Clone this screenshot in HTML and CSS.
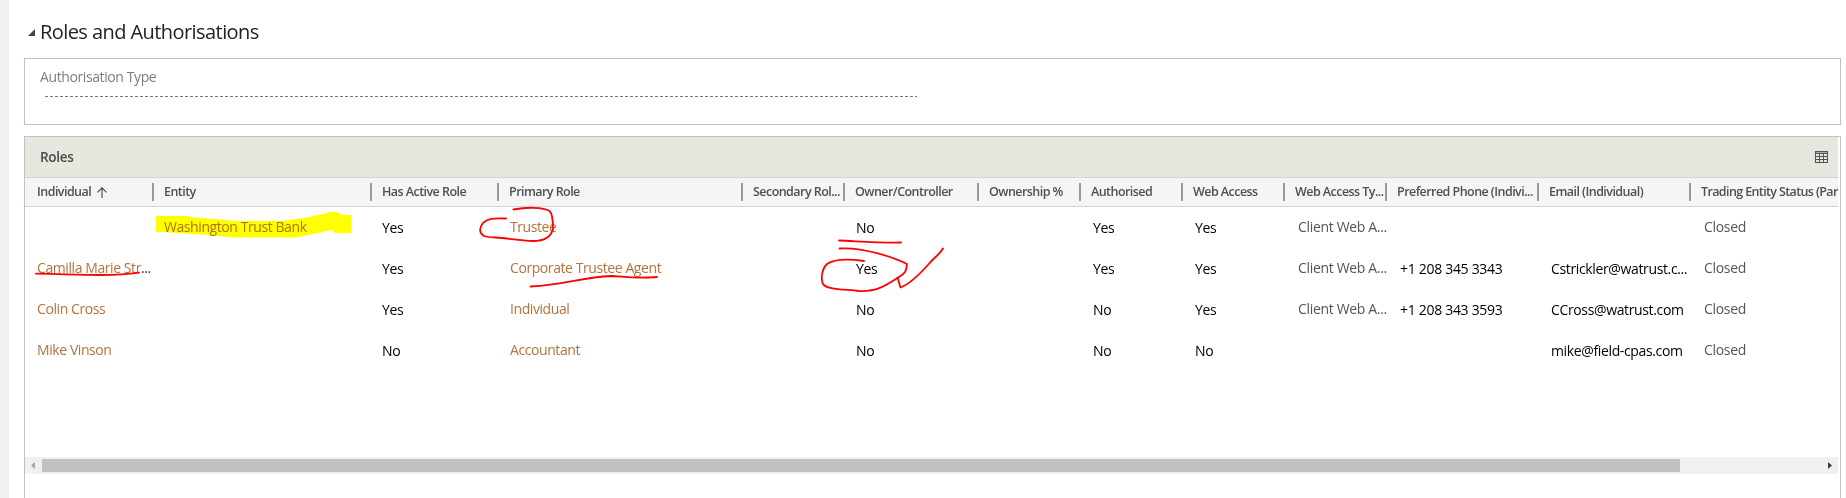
FILE: index.html
```html
<!DOCTYPE html>
<html lang="en">
<head>
<meta charset="utf-8">
<title>Roles and Authorisations</title>
<link rel="stylesheet" href="styles.css">
</head>
<body>
<main class="page">
  <h1 class="section-title">
    <svg class="caret" width="7" height="7" viewBox="0 0 7 7"><path d="M7 0V7H0Z" fill="#444"/></svg>
    <span>Roles and Authorisations</span>
  </h1>
  <section class="field-box">
    <label class="field-label">Authorisation Type</label>
    <div class="field-value"></div>
  </section>
  <section class="grid-box">
    <header class="grid-title">
      <span>Roles</span>
      <svg width="13" height="12" viewBox="0 0 13 12" fill="none" stroke="#555" shape-rendering="crispEdges"><path d="M.5 .5H12.5V11.5H.5ZM0 2.5H13M0 5.5H13M0 8.5H13M4.5 2V12M8.5 2V12"/><path d="M1 1.5H12" stroke="#aaa"/></svg>
    </header>
    <div class="row head">
      <div class="th first"><span>Individual</span><svg class="sort" width="10" height="11" viewBox="0 0 10 11" fill="none" stroke="#444" stroke-width="1.1"><path d="M5 11V1M.5 5.3L5 .8L9.5 5.3"/></svg></div>
      <div class="th"><span>Entity</span></div>
      <div class="th"><span>Has Active Role</span></div>
      <div class="th"><span>Primary Role</span></div>
      <div class="th"><span>Secondary Rol...</span></div>
      <div class="th"><span>Owner/Controller</span></div>
      <div class="th"><span>Ownership %</span></div>
      <div class="th"><span>Authorised</span></div>
      <div class="th"><span>Web Access</span></div>
      <div class="th"><span>Web Access Ty...</span></div>
      <div class="th"><span>Preferred Phone (Indivi...</span></div>
      <div class="th"><span>Email (Individual)</span></div>
      <div class="th last"><span>Trading Entity Status (Par</span></div>
    </div>
    <div class="row">
      <div></div><div class="link">Washington Trust Bank</div><div class="val">Yes</div><div class="link role">Trustee</div><div></div><div class="val own">No</div><div></div><div class="val in">Yes</div><div class="val in">Yes</div><div class="opt">Client Web A...</div><div></div><div></div><div class="opt">Closed</div>
    </div>
    <div class="row">
      <div class="link first">Camilla Marie Str<span class="dots">...</span></div><div></div><div class="val">Yes</div><div class="link role">Corporate Trustee Agent</div><div></div><div class="val own">Yes</div><div></div><div class="val in">Yes</div><div class="val in">Yes</div><div class="opt">Client Web A...</div><div class="val phone">+1 208 345 3343</div><div class="val mail">Cstrickler@watrust.c...</div><div class="opt">Closed</div>
    </div>
    <div class="row">
      <div class="link first">Colin Cross</div><div></div><div class="val">Yes</div><div class="link role">Individual</div><div></div><div class="val own">No</div><div></div><div class="val in">No</div><div class="val in">Yes</div><div class="opt">Client Web A...</div><div class="val phone">+1 208 343 3593</div><div class="val mail">CCross@watrust.com</div><div class="opt">Closed</div>
    </div>
    <div class="row">
      <div class="link first">Mike Vinson</div><div></div><div class="val">No</div><div class="link role">Accountant</div><div></div><div class="val own">No</div><div></div><div class="val in">No</div><div class="val in">No</div><div></div><div></div><div class="val mail">mike@field-cpas.com</div><div class="opt">Closed</div>
    </div>
    <div class="scrollbar">
      <svg width="17" height="17" viewBox="0 0 17 17"><path d="M10 5V12L6 8.5Z" fill="#a3a3a3"/></svg>
      <div class="thumb"></div>
      <svg width="17" height="17" viewBox="0 0 17 17"><path d="M7 5V12L11 8.5Z" fill="#404040"/></svg>
    </div>
  </section>
</main>
<svg class="marks highlight" width="1846" height="498" viewBox="0 0 1846 498">
  <path fill="#ff0" d="M156 216H185L195 217.5L215 219L235 221H282L307 217.5L325 213.5L330 212H337L342 215H351V233H335L332 230L313 234L295 237.5H235L213 235.5L193 234L161 232H156Z"/>
</svg>
<svg class="marks" width="1846" height="498" viewBox="0 0 1846 498">
  <g fill="none" stroke="#f00" stroke-width="1.8" stroke-linecap="round" stroke-linejoin="round">
    <path d="M36 273.7C60 274 80 275 101 275C118 275 130 274 139 272.7"/>
    <path d="M506 218.5C492 218 488 218.500 483 223C479 228 479 233 484 236C489 238 497 237 507 238.500C520 240 525 241 533 241C544 241 551 237 553 229C553 222 553 214 549.500 211C543 207 526 207 513.500 209.500"/>
    <path d="M530.500 286.500C565 285 582 277 611 276C622 276 630 279 657 277"/>
    <path d="M839 240.500C855 241 877 243 901 242.500"/>
    <path d="M864 261C850 259 834 259 827 264C821 270 821 280 823 284C826 289 840 289 859 291C876 292 885 286 899 277C907 272 906 270 907 264C895 258 864 247 839.500 248.500"/>
    <path d="M897.500 277.500L900.500 287.500C915 282 927 265 934 258.500C938 255 941 252 943 248.500"/>
  </g>
</svg>
</body>
</html>
```
FILE: styles.css
```css
* { box-sizing: border-box; }
body {
  margin: 0;
  background: #fff;
  font-family: "Open Sans", "Noto Sans", sans-serif;
  font-size: 14px;
  overflow: hidden;
}
.page {
  height: 498px;
  border-left: 9px solid #f0f0f0;
  padding: 0 5px 0 15px;
  display: flex;
  flex-direction: column;
}
.section-title {
  margin: 0;
  height: 58px;
  padding: 5px 0 0 4px;
  display: flex;
  align-items: center;
  gap: 5px;
  font-size: 20px;
  font-weight: 400;
  letter-spacing: -0.57px;
  color: #222;
}
.caret { margin-top: 1px; }
.field-box {
  height: 67px;
  flex: none;
  border: 1px solid #bcc3c5;
  padding: 7px 15px 0;
}
.field-label {
  display: block;
  line-height: 22px;
  color: #7d7d7d;
  letter-spacing: -0.4px;
}
.field-value {
  width: 872px;
  height: 1px;
  margin: 8px 0 0 5px;
  background: repeating-linear-gradient(90deg, #777 0 3px, #fff 3px 5px);
}
.grid-box {
  flex: 1;
  margin-top: 11px;
  border: 1px solid #bcc3c5;
  border-bottom: 0;
  padding-right: 2px;
}
.grid-title {
  height: 40px;
  padding: 0 10px 1px 15px;
  display: flex;
  align-items: center;
  justify-content: space-between;
  background: #e6e7de;
  color: #4a4a4a;
  font-size: 13.5px;
  font-weight: 600;
  letter-spacing: -0.3px;
}
.grid-title span { padding-top: 1px; }
.row {
  display: grid;
  grid-template-columns: 129px 218px 127px 244px 102px 134px 102px 102px 102px 102px 152px 152px 1fr;
  height: 41px;
  line-height: 40px;
  white-space: nowrap;
}
.row > div { padding-left: 10px; }
.row > .first { padding-left: 12px; }
.row.head {
  height: 30px;
  background: #f5f5f5;
  border: solid #d2d4d4;
  border-width: 1px 0;
  font-size: 12.5px;
  font-weight: 600;
  letter-spacing: -0.55px;
  color: #505050;
  line-height: 28px;
}
.th {
  position: relative;
  display: flex;
}
.th::after {
  content: "";
  position: absolute;
  right: 0;
  top: 5px;
  width: 2px;
  height: 18px;
  background: #999;
}
.th.last { letter-spacing: -0.62px; }
.th.last::after { display: none; }
.sort { margin: 9px 0 0 6px; }
.link { color: #b1743b; letter-spacing: -0.42px; }
.dots { color: #333; }
.val { color: #000; padding-top: 1px; letter-spacing: -0.3px; }
.opt { color: #555; letter-spacing: -0.33px; }
.row > .role { padding-left: 11px; }
.row > .own { padding-left: 11px; }
.row > .in, .row > .mail { padding-left: 12px; }
.row > .opt, .row > .phone { padding-left: 13px; }
.row > .mail { letter-spacing: -0.36px; }
.scrollbar {
  height: 17px;
  margin-top: 86px;
  display: flex;
  align-items: center;
  justify-content: space-between;
  background: #f0f0f0;
}
.thumb {
  width: 1638px;
  height: 13px;
  margin-right: auto;
  background: #c1c1c1;
}
.marks {
  position: absolute;
  left: 0;
  top: 0;
  pointer-events: none;
}
.highlight { mix-blend-mode: multiply; }
```
